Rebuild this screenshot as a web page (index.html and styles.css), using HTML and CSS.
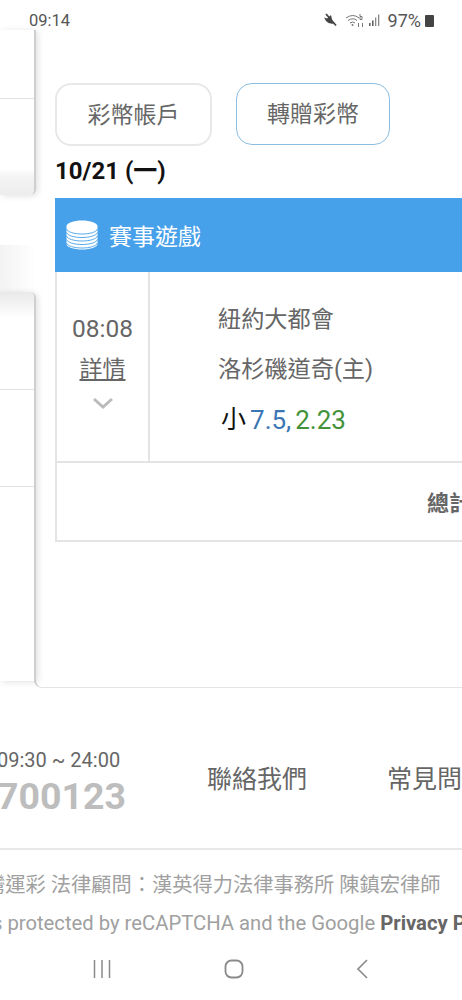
FILE: index.html
```html
<!DOCTYPE html>
<html lang="zh-Hant">
<head>
  <meta charset="UTF-8">
  <meta name="viewport" content="width=device-width, initial-scale=1.0">
  <title>彩幣帳戶</title>
  <link rel="stylesheet" href="styles.css">
</head>
<body>

  <header class="status-bar">
    <span class="clock">09:14</span>
    <div class="status-icons">
      <svg class="icon-mute" width="16" height="14" viewBox="0 0 16 14"><path d="M1 4.500l3 1 4-3.500 2 9-4.500-1L3 8z" fill="#444"/><path d="M3 1l10 11.500" stroke="#444" stroke-width="1.800"/></svg>
      <svg class="icon-wifi" width="20" height="15" viewBox="0 0 20 15" fill="none" stroke="#777" stroke-width="1"><path d="M1 5q7-5 13 0M3 7.500q5-3.500 9 0M5 10q3-2 5 0"/><circle cx="7.500" cy="12" r="1" fill="#777" stroke="none"/><path d="M15 3.500h2v3h-2zM15 1v2M13.500 10v4M17.500 10v4"/></svg>
      <svg class="icon-signal" width="12" height="12" viewBox="0 0 12 12" fill="#666"><rect x="0" y="9" width="1.600" height="3"/><rect x="3" y="6.500" width="1.600" height="5.500"/><rect x="6" y="3.500" width="1.300" height="8.500" fill="#888"/><rect x="9" y="0.500" width="1.300" height="11.500" fill="#888"/></svg>
      <span class="battery-text">97%</span>
      <span class="battery"></span>
    </div>
  </header>

  <div class="stage">
    <aside class="drawer">
      <div class="drawer-card drawer-card-top">
        <div class="drawer-row drawer-row-first"></div>
        <div class="drawer-shade"></div>
      </div>
      <div class="drawer-gap"></div>
      <div class="drawer-card drawer-card-bottom">
        <div class="drawer-row drawer-row-head"></div>
        <div class="drawer-row drawer-row-line"></div>
      </div>
    </aside>

    <main class="panel">
      <div class="tabs">
        <a class="tab tab-grey">彩幣帳戶</a>
        <a class="tab tab-blue">轉贈彩幣</a>
      </div>
      <h2 class="date">10/21 (一)</h2>

      <section class="game">
        <div class="game-head">
          <svg class="coins" width="32" height="30" viewBox="0 0 32 30">
            <path d="M.5 6C.5 3 7.500.5 16 .5S31.500 3 31.500 6v18c0 3-7 5.500-15.500 5.500S.5 27 .5 24z" fill="#fff"/>
            <path d="M.5 9c1 3 7.500 5 15.500 5s14.500-2 15.500-5M.5 12.500c1 3 7.500 5 15.500 5s14.500-2 15.500-5M.5 16c1 3 7.500 5 15.500 5s14.500-2 15.500-5M.5 19.500c1 3 7.500 5 15.500 5s14.500-2 15.500-5M.5 23c1 3 7.500 5 15.500 5s14.500-2 15.500-5" fill="none" stroke="#46a0ea" stroke-width="0.900"/>
          </svg>
          <span class="game-title">賽事遊戲</span>
        </div>

        <div class="game-row">
          <div class="game-time">
            <span class="time">08:08</span>
            <a class="details">詳情</a>
            <svg class="chevron" width="22" height="12" viewBox="0 0 22 12" fill="none" stroke="#bbb" stroke-width="3"><path d="M2 2l9 8 9-8"/></svg>
          </div>
          <div class="game-info">
            <p class="team">紐約大都會</p>
            <p class="team">洛杉磯道奇(主)</p>
            <p class="odds"><span class="odds-pick">小</span><span class="odds-line">7.5,</span><span class="odds-rate">2.23</span></p>
          </div>
        </div>

        <div class="game-total"><strong>總計</strong></div>
      </section>
    </main>
  </div>

  <footer class="site-foot">
    <div class="contact">
      <div class="hotline">
        <span class="hours">09:30 ~ 24:00</span>
        <strong class="phone">700123</strong>
      </div>
      <a class="foot-link foot-link-contact">聯絡我們</a>
      <a class="foot-link">常見問題</a>
    </div>
    <div class="legal">
      <p class="legal-line legal-cn">灣運彩 法律顧問：漢英得力法律事務所 陳鎮宏律師</p>
      <p class="legal-line legal-en">is protected by reCAPTCHA and the Google <b>Privacy Policy</b></p>
    </div>
  </footer>

  <nav class="nav-bar">
    <svg width="18" height="18" viewBox="0 0 18 18" fill="none" stroke="#8a8a8a" stroke-width="1.500"><path d="M1.500 0v18M9 0v18M16.500 0v18"/></svg>
    <svg width="20" height="20" viewBox="0 0 20 20" fill="none" stroke="#8a8a8a" stroke-width="1.800"><rect x="1.500" y="1.500" width="17" height="17" rx="6"/></svg>
    <svg width="12" height="20" viewBox="0 0 12 20" fill="none" stroke="#8a8a8a" stroke-width="1.600"><path d="M11 1L2 10l9 9"/></svg>
  </nav>

</body>
</html>
```

FILE: styles.css
```css
* { margin: 0; padding: 0; box-sizing: border-box; }
html, body { height: 1000px; }
body {
  width: 462px; overflow: hidden; background: #fff; color: #666;
  font-family: Roboto, 'Noto Sans CJK TC', sans-serif;
}

.status-bar { height: 30px; padding: 10px 28px 0 29px; display: flex; justify-content: space-between; align-items: center; }
.clock { font-size: 16.500px; color: #555; }
.status-icons { display: flex; align-items: center; gap: 4px; }
.icon-wifi { margin-left: 2px; }
.battery-text { font-size: 18px; color: #555; margin-left: 3px; }
.battery { width: 9px; height: 12px; margin-top: 1px; background: #444; border-radius: 1px; }

.stage { height: 658px; display: flex; }
.drawer { width: 36px; flex-shrink: 0; display: flex; flex-direction: column; position: relative; z-index: 1; }
.drawer-card { background: #fff; border-right: 2px solid #cfcfcf; box-shadow: 2px 1px 6px rgba(0,0,0,0.12); }
.drawer-card-top { height: 165px; border-radius: 0 0 6px 0; display: flex; flex-direction: column; }
.drawer-row-first { height: 69px; border-bottom: 1px solid #e2e2e2; }
.drawer-shade { flex: 1; background: linear-gradient(#fff 72%, #f5f5f5 80%, #ececec 100%); border-radius: 0 0 5px 0; }
.drawer-gap { height: 97px; background: linear-gradient(to right, #f3f3f3, #fff) 0 50px / 100% 47px no-repeat; }
.drawer-card-bottom { flex: 1; margin-bottom: 7px; border-radius: 0 6px 0 0; }
.drawer-row-head { height: 98px; border-radius: 0 5px 0 0; background: linear-gradient(#e9e9e9, #fff 26px); border-bottom: 1px solid #e2e2e2; }
.drawer-row-line { height: 97px; border-bottom: 1px solid #e2e2e2; }

.panel { width: 600px; flex-shrink: 0; padding: 53px 0 0 19px; position: relative; }
.panel::after {
  content: ""; position: absolute; left: -2px; right: 0; bottom: 0; height: 10px;
  border-left: 2px solid #d6d6d6; border-bottom: 1px solid #e4e4e4; border-radius: 0 0 0 8px;
}
.tabs { display: flex; gap: 24px; }
.tab {
  height: 63px; padding-bottom: 4px; display: flex; align-items: center; justify-content: center;
  font-size: 23px; border-radius: 16px; background: #fff;
}
.tab-grey { width: 157px; border: 2px solid #e8e8e8; }
.tab-blue { width: 154px; height: 62px; border: 1px solid #8dbde0; }
.date { font-size: 24px; font-weight: 700; color: #111; margin: 12px 0 13px; line-height: 27px; }

.game { width: 560px; height: 344px; border: 2px solid #e4e4e4; border-top: 0; }
.game-head {
  height: 74px; margin: 0 -2px; background: #46a0ea; display: flex; align-items: center;
  padding-left: 11px; gap: 11px; color: #fff;
}
.game-title { font-size: 23px; }
.game-row { height: 191px; display: flex; border-bottom: 2px solid #e4e4e4; }
.game-time { width: 93px; border-right: 2px solid #e4e4e4; display: flex; flex-direction: column; align-items: center; padding-top: 40px; }
.time { font-size: 24.500px; line-height: 34px; }
.details { font-size: 23px; line-height: 34px; margin-top: 7px; text-decoration: underline; }
.chevron { margin-top: 10px; }
.game-info { padding: 30px 0 0 68px; }
.team { font-size: 23.200px; line-height: 34px; margin-bottom: 16px; }
.odds { display: flex; gap: 4px; line-height: 36px; margin-left: 3px; margin-top: 1px; font-size: 26px; }
.odds-pick { color: #111; font-size: 25px; }
.odds-line { color: #3b76b4; }
.odds-rate { color: #43923a; }
.game-total { padding: 22px 0 0 370px; font-size: 22px; }

.site-foot { overflow: hidden; }
.contact { height: 162px; display: flex; align-items: center; padding-top: 20px; border-bottom: 2px solid #e8e8e8; }
.hotline { width: 210px; margin-left: -3px; margin-top: 8px; display: flex; flex-direction: column; flex-shrink: 0; }
.hours { font-size: 20px; line-height: 27px; color: #666; }
.phone { font-size: 37.500px; line-height: 44px; color: #bdbdbd; }
.foot-link { font-size: 25px; flex-shrink: 0; white-space: nowrap; margin-top: -2px; }
.foot-link-contact { width: 180px; }
.legal { white-space: nowrap; }
.legal-line { color: #a0a0a0; font-size: 20.250px; line-height: 38px; }
.legal-cn { margin-left: -15px; padding-top: 16px; }
.legal-en { margin-left: -13px; }
.legal-en b { color: #666; }

.nav-bar { display: flex; justify-content: space-between; align-items: center; padding: 0 94px 0 93px; margin-top: 7px; height: 40px; }
```
